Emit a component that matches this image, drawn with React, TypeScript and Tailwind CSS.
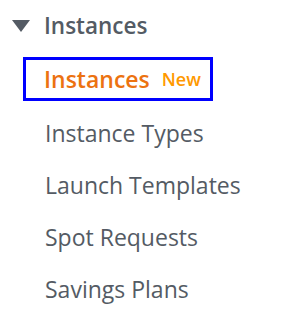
export default function App() {
  const items = ['Instance Types', 'Launch Templates', 'Spot Requests', 'Savings Plans'];

  return (
    <div
      className="h-[309px] w-[296px] bg-white text-[#545b64]"
      style={{ fontFamily: '"Open Sans", sans-serif' }}
    >
      {/* Section header */}
      <div className="flex h-[48px] items-center pl-[12px] pt-[4px]">
        <svg width="18" height="12" viewBox="0 0 18 12" className="mr-[14px]">
          <path d="M0 0 H18 L9 12 Z" fill="#545b64" />
        </svg>
        <span className="text-[22.5px] font-semibold leading-none">Instances</span>
      </div>

      {/* Selected item */}
      <div className="ml-[23px] mt-[9px] flex h-[44px] w-[190px] items-center border-[3px] border-[#0000ff] pl-[18px]">
        <span className="text-[23px] font-semibold leading-none text-[#ec7211]">Instances</span>
        <span className="ml-[12px] text-[18px] font-semibold leading-none text-[#ff9900]">New</span>
      </div>

      {/* Other items */}
      <ul className="mt-[6px] pl-[45px]">
        {items.map(item => (
          <li key={item} className="flex h-[52px] items-center text-[23px] leading-none">
            {item}
          </li>
        ))}
      </ul>
    </div>
  );
}
